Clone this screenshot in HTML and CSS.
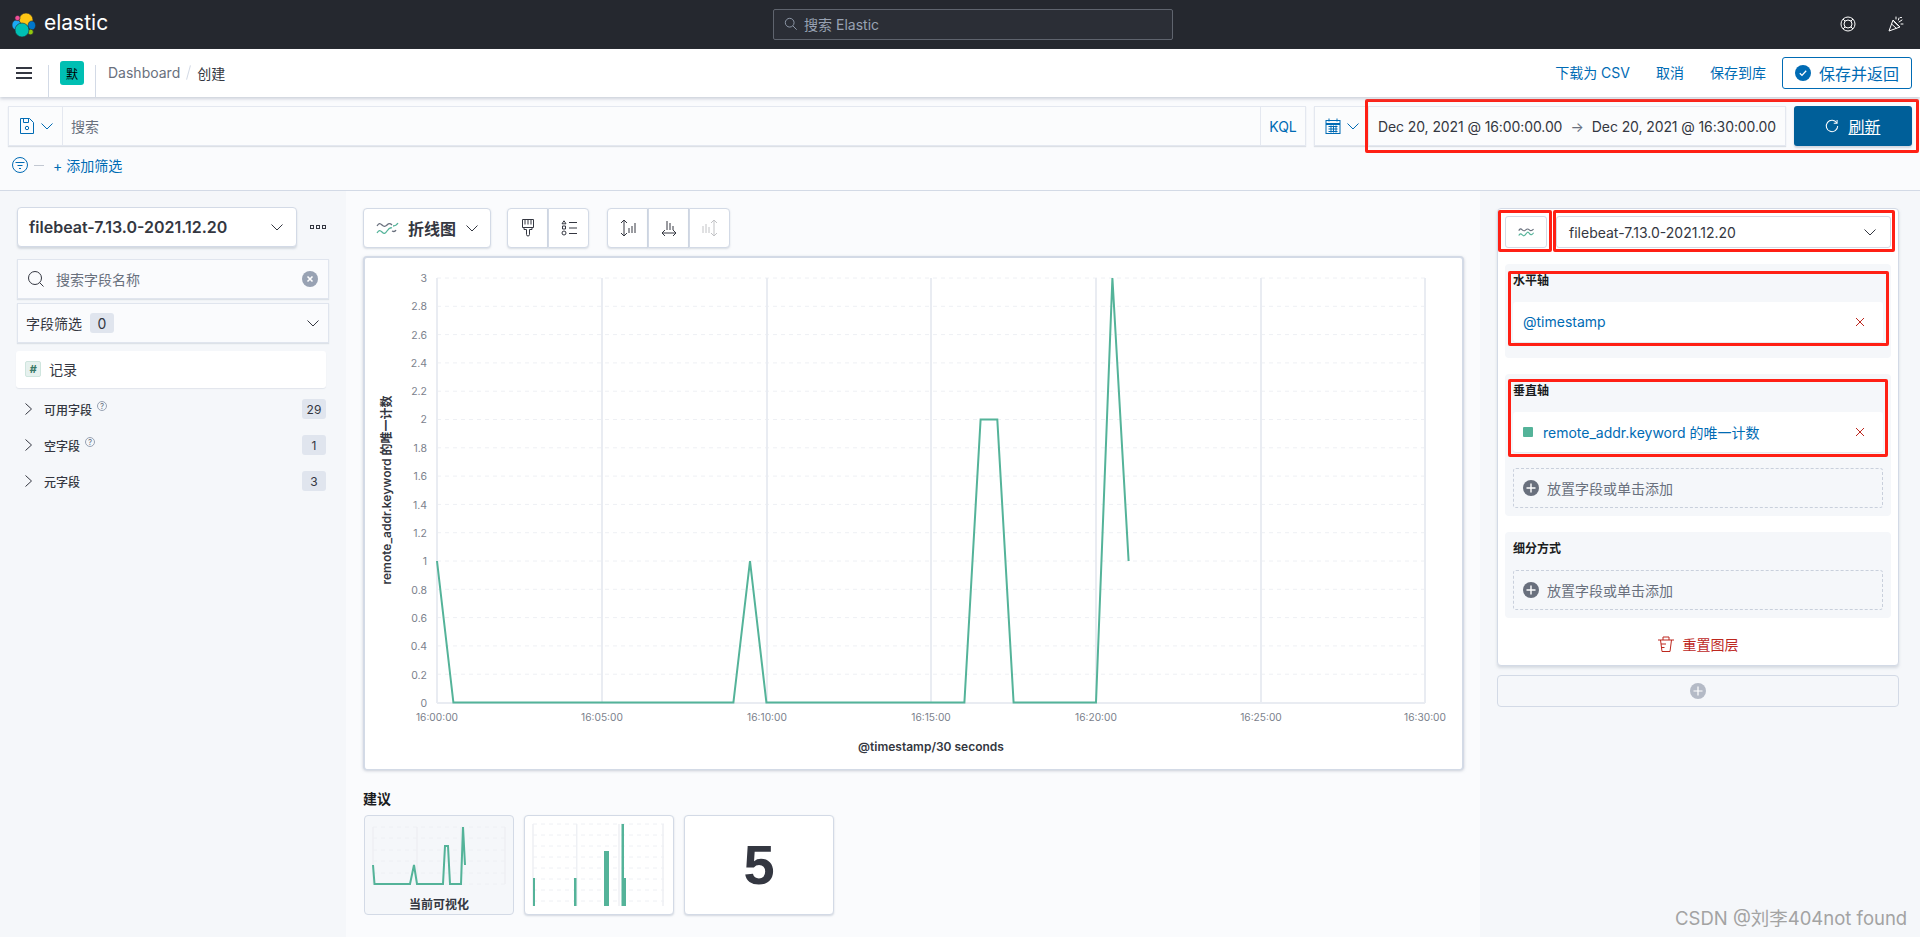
FILE: index.html
```html
<!DOCTYPE html>
<html lang="zh">
<head>
<meta charset="utf-8">
<title>Elastic Lens</title>
<link rel="stylesheet" href="styles.css">
</head>
<body>
<header class="topbar">
  <div class="brand">
    <svg class="logo" viewBox="0 0 24 24" stroke="#25282f" stroke-width=".6"><circle cx="14" cy="7" r="7" fill="#fec514"/><ellipse cx="4.500" cy="12" rx="4.500" ry="5" fill="#1ba9f5"/><ellipse cx="19.800" cy="12.500" rx="3.800" ry="4.500" fill="#0077cc"/><circle cx="5.500" cy="5" r="2.600" fill="#f04e98"/><circle cx="18.500" cy="19" r="2.800" fill="#93c90e"/><circle cx="10" cy="17" r="7" fill="#00bfb3"/></svg>
    <span class="wordmark">elastic</span>
  </div>
  <div class="globalsearch">
    <svg class="i14" viewBox="0 0 16 16"><circle cx="6.500" cy="6.500" r="5" fill="none" stroke="#98a2b3"/><path d="M10.200 10.200L14.500 14.500" stroke="#98a2b3"/></svg>
    <span>搜索 Elastic</span>
  </div>
  <div class="topicons">
    <svg class="i16" viewBox="0 0 16 16" fill="none" stroke="#fff"><circle cx="8" cy="8" r="7"/><circle cx="8" cy="8" r="4"/><path d="M3 3l2.200 2.200M13 3l-2.200 2.200M3 13l2.200-2.200M13 13l-2.200-2.200"/></svg>
    <svg class="i16" viewBox="0 0 16 16" fill="none" stroke="#fff"><path d="M5 4L1 15l11-4zM3.600 8l5 4.600M5.400 5.200l5.400 5"/><path d="M8 1v2M11 2l-.6 2M14 4l-3 2M15 8h-2M12.500 1.500h1" stroke-linecap="round"/></svg>
  </div>
</header>

<nav class="appbar">
  <div class="appleft">
    <div class="navcell menu"><svg class="burger" viewBox="0 0 16 12"><path d="M0 1h16M0 6h16M0 11h16" stroke="#343741" stroke-width="2"/></svg></div>
    <div class="navcell space"><span class="spacebadge">默</span></div>
    <div class="crumbs"><span class="crumb">Dashboard</span><span class="slash"></span><span class="current">创建</span></div>
  </div>
  <div class="appright">
    <a class="link">下载为 CSV</a><a class="link">取消</a><a class="link">保存到库</a>
    <button class="savebtn"><svg class="i16" viewBox="0 0 16 16"><circle cx="8" cy="8" r="8" fill="#006bb4"/><path d="M4.800 8.200l2.200 2.200 4.200-4.600" fill="none" stroke="#fff" stroke-width="1.300"/></svg><span>保存并返回</span></button>
  </div>
</nav>

<section class="querybar">
  <div class="queryrow">
    <div class="queryinput">
      <div class="savedq">
        <svg class="i14" viewBox="0 0 14 16" fill="none" stroke="#006bb4"><path d="M.5.500h9l4 4v11H.5z"/><path d="M3.500.500v4h5v-4"/><circle cx="7" cy="10" r="1.700"/></svg>
        <svg class="chev" viewBox="0 0 12 7"><path d="M.5.500L6 6 11.500.500" fill="none" stroke="#006bb4"/></svg>
      </div>
      <span class="queryph">搜索</span>
      <span class="kql">KQL</span>
    </div>
    <div class="timegroup">
      <div class="quick">
        <svg class="i16" viewBox="0 0 16 16" fill="none" stroke="#006bb4"><rect x="1" y="2.500" width="14" height="13"/><path d="M1 6h14" stroke-width="2"/><path d="M4 .500v3M12 .500v3M3.500 8.500h9M3.500 11h9M3.500 13.500h9M6 7.500v7M8.500 7.500v7M11 7.500v7" stroke-width="1"/></svg>
        <svg class="chev" viewBox="0 0 12 7"><path d="M.5.500L6 6 11.500.500" fill="none" stroke="#006bb4"/></svg>
      </div>
      <div class="daterange"><span>Dec 20, 2021 @ 16:00:00.00</span><span class="arrow">→</span><span>Dec 20, 2021 @ 16:30:00.00</span></div>
    </div>
    <button class="refresh"><svg class="i14" viewBox="0 0 16 16" fill="none" stroke="#fff" stroke-width="1.200"><path d="M13.500 4.500A6.500 6.500 0 1 0 14.500 8"/><path d="M10 4.800h3.800V1"/></svg><span>刷新</span></button>
  </div>
  <div class="filterrow">
    <svg class="i16" viewBox="0 0 16 16" fill="none" stroke="#006bb4"><circle cx="8" cy="8" r="7.500"/><path d="M3.500 5.500h9M5.500 8.500h5M7 11.500h2"/></svg>
    <span class="fdash"></span>
    <a class="addfilter">+ 添加筛选</a>
  </div>
</section>

<main class="workspace">
  <aside class="fields">
    <div class="indexrow">
      <div class="indexsel"><span>filebeat-7.13.0-2021.12.20</span><svg class="chev" viewBox="0 0 12 7"><path d="M.5.500L6 6 11.500.500" fill="none" stroke="#343741"/></svg></div>
      <svg class="dots" viewBox="0 0 16 4" fill="none" stroke="#343741"><rect x=".5" y=".5" width="3" height="3"/><rect x="6.500" y=".5" width="3" height="3"/><rect x="12.500" y=".5" width="3" height="3"/></svg>
    </div>
    <div class="fieldsearch">
      <svg class="i16" viewBox="0 0 16 16" fill="none" stroke="#343741"><circle cx="7" cy="7" r="6.500"/><path d="M11.600 11.600L15.500 15.500"/></svg>
      <span class="ph">搜索字段名称</span>
      <svg class="i16" viewBox="0 0 16 16"><circle cx="8" cy="8" r="8" fill="#98a2b3"/><path d="M5.500 5.500l5 5M10.500 5.500l-5 5" stroke="#fff" stroke-width="1.600"/></svg>
    </div>
    <div class="fieldfilter">
      <span class="ff-label">字段筛选</span><span class="ff-count">0</span>
      <svg class="chev" viewBox="0 0 12 7"><path d="M.5.500L6 6 11.500.500" fill="none" stroke="#343741"/></svg>
    </div>
    <div class="recordrow"><span class="hash">#</span><span>记录</span></div>
    <div class="group"><svg class="caret" viewBox="0 0 7 12"><path d="M.5.500L6.500 6 .5 11.500" fill="none" stroke="#343741"/></svg><span class="glabel">可用字段</span><span class="qmark">?</span><span class="gcount">29</span></div>
    <div class="group"><svg class="caret" viewBox="0 0 7 12"><path d="M.5.500L6.500 6 .5 11.500" fill="none" stroke="#343741"/></svg><span class="glabel">空字段</span><span class="qmark">?</span><span class="gcount">1</span></div>
    <div class="group"><svg class="caret" viewBox="0 0 7 12"><path d="M.5.500L6.500 6 .5 11.500" fill="none" stroke="#343741"/></svg><span class="glabel">元字段</span><span class="gcount">3</span></div>
  </aside>

  <section class="canvas">
    <div class="toolbar">
      <button class="charttype">
        <svg class="lineicon" viewBox="0 0 24 14" fill="none"><path d="M1 5c2-3 3-3 5-1s3 2 5 0 3-2 5 0" stroke="#69707d" stroke-width="1.300"/><path d="M1 12c2-3 3-3 5-1s3 2 5-1 3-4 5-3" stroke="#54b399" stroke-width="1.300"/><path d="M16 10c2 1 3 1 4-1" stroke="#69707d" stroke-width="1.300"/><path d="M17 5c2 0 3 0 5-3" stroke="#54b399" stroke-width="1.300"/></svg>
        <span>折线图</span>
        <svg class="chev" viewBox="0 0 12 7"><path d="M.5.500L6 6 11.500.500" fill="none" stroke="#343741"/></svg>
      </button>
      <div class="btngroup">
        <button class="tool"><svg class="i18" viewBox="0 0 16 18" fill="none" stroke="#343741"><path d="M2.500.500h11v8h-11zM5 .5v5M8 .5v5M11 .5v5M4 8.500v2h2.500v5a1.500 1.500 0 0 0 3 0v-5H12v-2"/></svg></button>
        <button class="tool"><svg class="i16" viewBox="0 0 16 16" fill="none" stroke="#343741"><path d="M3 .8l2 3H1zM1.500 6h3v3h-3z"/><circle cx="3" cy="13" r="2"/><path d="M8 2.500h8M8 8h8M8 13.500h8"/></svg></button>
      </div>
      <div class="btngroup second">
        <button class="tool"><svg class="i18" viewBox="0 0 16 18" fill="none" stroke="#343741"><path d="M4 1v16M1 4l3-3 3 3M1 14l3 3 3-3M9 9v5M12 7v7M15 4v10"/></svg></button>
        <button class="tool"><svg class="i18" viewBox="0 0 16 18" fill="none" stroke="#343741"><path d="M1 14h14M4 11l-3 3 3 3M12 11l3 3-3 3M6 2v9M9 4v7M12 7v4"/></svg></button>
        <button class="tool"><svg class="i18" viewBox="0 0 16 18" fill="none" stroke="#c2c3c6"><path d="M12 1v16M9 4l3-3 3 3M9 14l3 3 3-3M1 7v7M4 5v9M7 8v6"/></svg></button>
      </div>
    </div>

    <div class="chartpanel">
      <svg class="chart" viewBox="2 2 1097 511">
        <g class="hgrid">
          <path d="M74 22H1062M74 50.300H1062M74 78.600H1062M74 106.900H1062M74 135.200H1062M74 163.500H1062M74 191.800H1062M74 220.100H1062M74 248.400H1062M74 276.700H1062M74 305H1062M74 333.300H1062M74 361.600H1062M74 389.900H1062M74 418.200H1062"/>
        </g>
        <g class="vgrid"><path d="M74 22V447M239 22V447M404 22V447M568 22V447M733 22V447M898 22V447M1062 22V447M74 447H1062"/></g>
        <g class="ylabels">
          <text x="64" y="26">3</text><text x="64" y="54">2.8</text><text x="64" y="83">2.6</text><text x="64" y="111">2.4</text><text x="64" y="139">2.2</text><text x="64" y="167">2</text><text x="64" y="196">1.8</text><text x="64" y="224">1.6</text><text x="64" y="253">1.4</text><text x="64" y="281">1.2</text><text x="64" y="309">1</text><text x="64" y="338">0.8</text><text x="64" y="366">0.6</text><text x="64" y="394">0.4</text><text x="64" y="423">0.2</text><text x="64" y="451">0</text>
        </g>
        <g class="xlabels">
          <text x="74" y="465">16:00:00</text><text x="239" y="465">16:05:00</text><text x="404" y="465">16:10:00</text><text x="568" y="465">16:15:00</text><text x="733" y="465">16:20:00</text><text x="898" y="465">16:25:00</text><text x="1062" y="465">16:30:00</text>
        </g>
        <text class="axistitle" x="568" y="495">@timestamp/30 seconds</text>
        <text class="axistitle" transform="translate(27.500 234) rotate(-90)">remote_addr.keyword 的唯一计数</text>
        <polyline class="series" points="74,305 90.400,446.500 370.400,446.500 387,305 403.400,446.500 601.400,446.500 617.600,163.500 634.300,163.500 650.600,446.500 733,446.500 749.400,22 765.600,305"/>
      </svg>
    </div>

    <h3 class="sugtitle">建议</h3>
    <div class="suggestions">
      <div class="sug current-sug">
        <svg class="thumb" viewBox="1 1 148 74">
          <path class="tgrid" d="M9 12H141M9 23H141M9 35H141M9 46H141M9 58H141M9 69H141"/>
          <path class="tvgrid" d="M9 12V69M53 12V69M97 12V69M141 12V69"/>
          <polyline class="tline" points="9,50 10.500,69 46,69 50,50 53,69 79,69 81,31 84,31 86,69 97,69 99,12 101,50"/>
        </svg>
        <span class="suglabel">当前可视化</span>
      </div>
      <div class="sug">
        <svg class="thumb tall" viewBox="1 1 148 98">
          <path class="tgrid" d="M9 9H140M9 20H140M9 31H140M9 42H140M9 53H140M9 64H140M9 75H140M9 86H140"/>
          <path class="tvgrid" d="M9 9V91M52.700 9V91M95 9V91M139 9V91"/>
          <path class="tbars" d="M9 63h2v28H9zM50 63h2.500v28H50zM80 36h5v55h-5zM97.500 9h2.500v82h-2.500zM100 63h2v28h-2z"/>
        </svg>
      </div>
      <div class="sug metric"><span>5</span></div>
    </div>
  </section>

  <aside class="config">
    <div class="layer">
      <div class="layerhead">
        <button class="layertype"><svg class="lineicon small" viewBox="0 0 24 14" fill="none"><path d="M1 5c2-3 3-3 5-1s3 2 5 0 3-2 5 0 4 1 6-1" stroke="#69707d"/><path d="M1 12c2-3 3-3 5-1s3 2 5-1 3-4 5-1 4 2 6-1" stroke="#54b399"/></svg></button>
        <div class="layerindex"><span>filebeat-7.13.0-2021.12.20</span><svg class="chev" viewBox="0 0 12 7"><path d="M.5.500L6 6 11.500.500" fill="none" stroke="#343741"/></svg></div>
      </div>
      <div class="dimgroup first">
        <div class="dimlabel">水平轴</div>
        <div class="dimrow"><span class="dimtext">@timestamp</span><svg class="x" viewBox="0 0 8 8"><path d="M0 0l8 8M8 0L0 8" stroke="#bd271e"/></svg></div>
      </div>
      <div class="dimgroup">
        <div class="dimlabel">垂直轴</div>
        <div class="dimrow"><i class="swatch"></i><span class="dimtext">remote_addr.keyword 的唯一计数</span><svg class="x" viewBox="0 0 8 8"><path d="M0 0l8 8M8 0L0 8" stroke="#bd271e"/></svg></div>
        <div class="dropzone"><svg class="plus" viewBox="0 0 16 16"><circle cx="8" cy="8" r="8" fill="#69707d"/><path d="M8 3.500v9M3.500 8h9" stroke="#fff" stroke-width="1.400"/></svg><span>放置字段或单击添加</span></div>
      </div>
      <div class="dimgroup">
        <div class="dimlabel">细分方式</div>
        <div class="dropzone"><svg class="plus" viewBox="0 0 16 16"><circle cx="8" cy="8" r="8" fill="#69707d"/><path d="M8 3.500v9M3.500 8h9" stroke="#fff" stroke-width="1.400"/></svg><span>放置字段或单击添加</span></div>
      </div>
      <div class="reset"><svg class="i16" viewBox="0 0 16 16" fill="none" stroke="#bd271e"><path d="M0 4h16M5 4V1h6v3M2.500 4l1.500 11.500h8L13.500 4M3 8h5M3.500 11.500h3"/></svg><span>重置图层</span></div>
    </div>
    <button class="addlayer"><svg class="plus" viewBox="0 0 16 16"><circle cx="8" cy="8" r="8" fill="#b4bac6"/><path d="M8 3.500v9M3.500 8h9" stroke="#fff" stroke-width="1.200"/></svg></button>
  </aside>
</main>

<div class="redbox rb-time"></div>
<div class="redbox rb-type"></div>
<div class="redbox rb-index"></div>
<div class="redbox rb-x"></div>
<div class="redbox rb-y"></div>
<div class="watermark">CSDN @刘李404not found</div>
</body>
</html>
```

FILE: styles.css
```css
* { box-sizing: border-box; }
html, body { margin: 0; height: 100%; }
body {
  width: 1920px; height: 937px; overflow: hidden; position: relative;
  display: flex; flex-direction: column;
  font-family: Inter, "Noto Sans CJK SC", sans-serif; font-size: 14px; color: #343741;
  background: #fafbfd;
}
button { font: inherit; color: inherit; padding: 0; cursor: pointer; }
svg { display: block; flex: none; }
.i14 { width: 14px; height: 16px; }
.i16 { width: 16px; height: 16px; }
.i18 { width: 16px; height: 18px; }
.chev { width: 12px; height: 7px; }

.topbar {
  height: 49px; flex: none; background: #25282f; position: relative;
  display: flex; align-items: center; justify-content: space-between; padding: 0 16px 0 12px;
}
.brand { display: flex; align-items: center; gap: 8px; }
.logo { width: 24px; height: 24px; }
.wordmark { color: #fff; font-size: 21px; font-weight: 400; line-height: 24px; padding-bottom: 3px; }
.globalsearch {
  width: 400px; height: 31px; margin: -1px 2px 0 0; border: 1px solid #5f646e; border-radius: 2px; background: #2b2e36;
  display: flex; align-items: center; gap: 6px; padding: 0 10px; color: #98a2b3; font-size: 14px;
}
.topicons { display: flex; gap: 32px; margin-top: -1px; }

.appbar {
  height: 48px; flex: none; background: #fff; display: flex; justify-content: space-between;
  box-shadow: 0 2px 3px rgba(152,162,179,.45); position: relative; z-index: 2;
}
.appleft { display: flex; }
.navcell { height: 32px; margin-top: 16px; display: flex; justify-content: center; border-right: 1px solid #d3dae6; }
.menu { width: 49px; padding-right: 1px; }
.burger { width: 16px; height: 12px; margin-top: 2px; }
.space { width: 47px; }
.spacebadge {
  width: 24px; height: 24px; margin-top: -4px; border-radius: 3px; background: #00bfb3; color: #000;
  font-size: 12px; display: flex; align-items: center; justify-content: center;
}
.crumbs { display: flex; align-items: center; padding: 0 0 1px 12px; font-size: 14px; }
.crumb { color: #69707d; }
.slash { width: 1px; height: 15px; margin: 0 8px; background: #d3dae6; transform: rotate(15deg); }
.current { color: #343741; }
.appright { display: flex; align-items: center; padding: 0 8px 0 0; }
.link { color: #006bb4; margin-right: 26px; padding-bottom: 2px; }
.savebtn {
  width: 130px; height: 32px; margin-left: -10px; background: #fff; border: 1px solid #006bb4; border-radius: 3px;
  display: flex; align-items: center; gap: 8px; padding-left: 12px; color: #006bb4; font-size: 16px;
}
.querybar { height: 94px; flex: none; border-bottom: 1px solid #d3dae6; padding: 9px 8px 0; }
.queryrow { display: flex; align-items: stretch; height: 40px; }
.queryinput {
  width: 1298px; background: #fbfcfd; border: 1px solid #e4e8f0; box-shadow: 0 1px 1px rgba(152,162,179,.3);
  display: flex; align-items: center;
}
.savedq { width: 54px; height: 100%; flex: none; border-right: 1px solid #e4e8f0; display: flex; align-items: center; gap: 7px; padding-left: 11px; }
.queryph { color: #69707d; margin-left: 8px; flex: 1; }
.kql { height: 100%; width: 45px; border-left: 1px solid #e4e8f0; color: #006bb4; display: flex; align-items: center; justify-content: center; }
.timegroup { display: flex; margin-left: 8px; width: 472px; background: #fbfcfd; border: 1px solid #e4e8f0; box-shadow: 0 1px 1px rgba(152,162,179,.3); }
.quick { width: 53px; flex: none; display: flex; align-items: center; gap: 6px; padding-left: 10px; }
.daterange { flex: 1; display: flex; align-items: center; justify-content: space-between; padding: 0 9px; border-left: 1px solid #e4e8f0; white-space: nowrap; letter-spacing: -.1px; }
.arrow { color: #69707d; }
.refresh {
  width: 118px; margin-left: 8px; background: #005f99; border: 0; border-radius: 3px; color: #fff; font-size: 16px;
  display: flex; align-items: center; justify-content: center; gap: 9px; box-shadow: 0 2px 2px rgba(152,162,179,.4);
}
.refresh span { text-decoration: underline; }
.filterrow { display: flex; align-items: center; height: 16px; margin-top: 11px; padding-left: 4px; }
.fdash { width: 10px; height: 1px; background: #c2c8d2; margin: 0 9px 0 6px; }
.addfilter { color: #006bb4; font-size: 14px; }

.workspace { flex: 1; display: flex; min-height: 0; }
.fields { width: 346px; flex: none; background: #f5f7fa; padding: 16px 16px 0 16px; }
.indexrow { display: flex; align-items: center; justify-content: space-between; height: 40px; padding-left: 1px; padding-right: 4px; }
.dots { width: 16px; height: 4px; }
.indexsel {
  width: 280px; height: 40px; background: #fff; border-radius: 4px; border: 1px solid #d3dae6;
  box-shadow: 0 2px 2px rgba(152,162,179,.35);
  display: flex; align-items: center; justify-content: space-between; padding: 0 13px 0 11px;
  font-size: 16px; font-weight: 600; color: #343741;
}
.fieldsearch, .fieldfilter {
  margin: 12px 1px 0 1px; height: 40px; background: #fafbfd; border: 1px solid #e0e5ee;
  box-shadow: 0 1px 1px rgba(152,162,179,.25); display: flex; align-items: center;
}
.fieldsearch { padding: 0 10px; gap: 12px; }
.fieldsearch .ph { flex: 1; color: #69707d; font-size: 14px; }
.fieldfilter { margin-top: 4px; padding: 0 9px 0 8px; }
.ff-count { width: 24px; height: 20px; margin-left: 8px; margin-right: auto; background: #e0e5ee; border-radius: 3px; display: flex; align-items: center; justify-content: center; font-size: 14px; }
.recordrow {
  height: 37px; margin: 8px 4px 0 0; background: #fff; border-radius: 3px; display: flex; align-items: center; gap: 8px; padding: 0 0 1px 9px;
  box-shadow: 0 1px 1px rgba(152,162,179,.2); color: #343741;
}
.hash { width: 16px; height: 16px; background: #e6f1ee; border: 1px solid #cfe5de; border-radius: 2px; color: #387765; font-size: 11px; font-weight: 700; font-style: italic; display: flex; align-items: center; justify-content: center; }
.group { height: 36px; display: flex; align-items: center; margin-right: 4px; padding-left: 9px; font-size: 12px; }
.recordrow + .group { margin-top: 3px; }
.caret { width: 7px; height: 12px; margin-right: 12px; }
.glabel { font-weight: 500; color: #343741; }
.qmark { width: 10px; height: 10px; margin: -6px 0 0 5px; border: 1px solid #98a2b3; border-radius: 50%; color: #69707d; font-size: 8px; line-height: 8px; text-align: center; }
.gcount { width: 24px; height: 20px; margin-left: auto; background: #e0e5ee; border-radius: 3px; display: flex; align-items: center; justify-content: center; font-size: 12px; }

.canvas { width: 1134px; flex: none; padding: 17px 16px 0 17px; }
.toolbar { display: flex; gap: 16px; height: 40px; }
.charttype {
  width: 128px; height: 40px; background: #fff; border: 1px solid #d3dae6; border-radius: 4px; box-shadow: 0 1px 2px rgba(152,162,179,.35);
  display: flex; align-items: center; padding-left: 12px; font-size: 16px; font-weight: 600;
}
.charttype span { margin: 0 10px 0 8px; }
.lineicon { width: 24px; height: 14px; }
.lineicon.small { width: 17px; height: 10px; }
.lineicon.small path { stroke-width: 1.600; }
.btngroup { display: flex; }
.btngroup.second { margin-left: 2px; }
.tool {
  width: 41px; height: 40px; background: #fff; border: 1px solid #d3dae6; display: flex; align-items: center; justify-content: center;
  box-shadow: 0 1px 2px rgba(152,162,179,.35);
}
.tool:first-child { border-radius: 4px 0 0 4px; }
.tool:last-child { border-radius: 0 4px 4px 0; }
.chartpanel {
  margin-top: 8px; width: 1101px; height: 514px; background: #fff; border: 1px solid #d3dae6; border-radius: 4px;
  box-shadow: 0 1px 3px rgba(152,162,179,.5); border-left-width: 2px; border-top-width: 2px; border-right-width: 2px;
}
.chart { width: 1097px; height: 511px; }
.hgrid path { fill: none; stroke: #eef0f4; stroke-dasharray: 4 4; }
.vgrid path { fill: none; stroke: #e9ecf2; stroke-width: 2; }
.ylabels text { font-size: 10.500px; fill: #7b818c; text-anchor: end; }
.xlabels text { font-size: 10.200px; fill: #7b818c; text-anchor: middle; }
.axistitle { font-size: 12px; font-weight: 600; fill: #343741; text-anchor: middle; }
.series { fill: none; stroke: #54b399; stroke-width: 2; stroke-linejoin: miter; }
.sugtitle { margin: 19px 0 0; font-size: 14px; font-weight: 700; line-height: 20px; color: #1a1c21; }
.suggestions { display: flex; gap: 10px; margin-top: 6px; padding-left: 1px; }
.sug {
  width: 150px; height: 100px; background: #fff; border: 1px solid #d3dae6; border-radius: 4px; box-shadow: 0 1px 2px rgba(152,162,179,.4);
  position: relative; display: flex; flex-direction: column; align-items: center;
}
.current-sug { background: #f5f7fa; box-shadow: none; }
.thumb { width: 148px; height: 74px; }
.thumb.tall { height: 98px; }
.tgrid { fill: none; stroke: #eef0f4; stroke-dasharray: 4 4; }
.tvgrid { fill: none; stroke: #eef0f4; stroke-width: 1.500; }
.tline { fill: none; stroke: #54b399; stroke-width: 2; }
.tbars { fill: #54b399; }
.suglabel { font-size: 12px; font-weight: 600; margin-top: 5px; }
.metric { justify-content: center; }
.metric span { font-family: "Liberation Sans", sans-serif; font-weight: 700; font-size: 56px; line-height: 1; color: #343741; }

.config { width: 440px; flex: none; background: #f5f7fa; padding: 17px 21px 0 17px; }
.layer {
  height: 458px; background: #fff; border: 1px solid #d3dae6; border-radius: 4px; box-shadow: 0 2px 3px rgba(152,162,179,.35);
  padding: 7px 7px 0;
}
.layerhead { display: flex; gap: 9px; height: 32px; margin-bottom: 16px; }
.layertype { width: 42px; height: 32px; background: #fff; border: 1px solid #d3dae6; border-radius: 3px; display: flex; align-items: center; justify-content: center; flex: none; }
.layerindex {
  flex: 1; height: 32px; border: 1px solid #d3dae6; border-radius: 3px; display: flex; align-items: center; justify-content: space-between;
  padding: 0 14px 0 12px; font-size: 14px; color: #343741;
}
.dimgroup { background: #f5f7fa; border-radius: 4px; padding: 8px; margin-bottom: 16px; }
.dimgroup.first { padding-bottom: 16px; }
.dimlabel { font-size: 12px; font-weight: 700; color: #1a1c21; line-height: 18px; margin-bottom: 12px; }
.dimrow { height: 40px; background: #fff; border-radius: 3px; display: flex; align-items: center; padding: 0 19px 1px 10px; box-shadow: 0 1px 1px rgba(152,162,179,.15); }
.dimtext { flex: 1; color: #006bb4; font-size: 14px; }
.swatch { width: 10px; height: 10px; background: #54b399; border-radius: 1px; margin-right: 10px; }
.x { width: 8px; height: 8px; }
.dropzone {
  height: 40px; margin-top: 16px; border: 1px dashed #c9d0dc; border-radius: 3px; display: flex; align-items: center; gap: 8px; padding-left: 9px; color: #69707d; font-size: 14px;
}
.dimgroup > .dimlabel + .dropzone { margin-top: 12px; }
.plus { width: 16px; height: 16px; }
.reset { display: flex; justify-content: center; align-items: center; gap: 9px; color: #bd271e; font-size: 14px; margin-top: 4px; }
.addlayer { width: 402px; height: 32px; margin-top: 9px; background: transparent; border: 1px solid #d3dae6; border-radius: 4px; display: flex; align-items: center; justify-content: center; }

.redbox { position: absolute; border: 3px solid #ff2015; border-radius: 2px; pointer-events: none; }
.rb-time { left: 1365px; top: 99px; width: 554px; height: 54px; }
.rb-type { left: 1498px; top: 210px; width: 54px; height: 42px; }
.rb-index { left: 1553px; top: 210px; width: 342px; height: 42px; }
.rb-x { left: 1508px; top: 271px; width: 381px; height: 75px; }
.rb-y { left: 1508px; top: 379px; width: 380px; height: 78px; }
.watermark { position: absolute; left: 1675px; top: 907px; font-size: 18.500px; color: #a3a3a3; white-space: nowrap; line-height: 22px; }
```
